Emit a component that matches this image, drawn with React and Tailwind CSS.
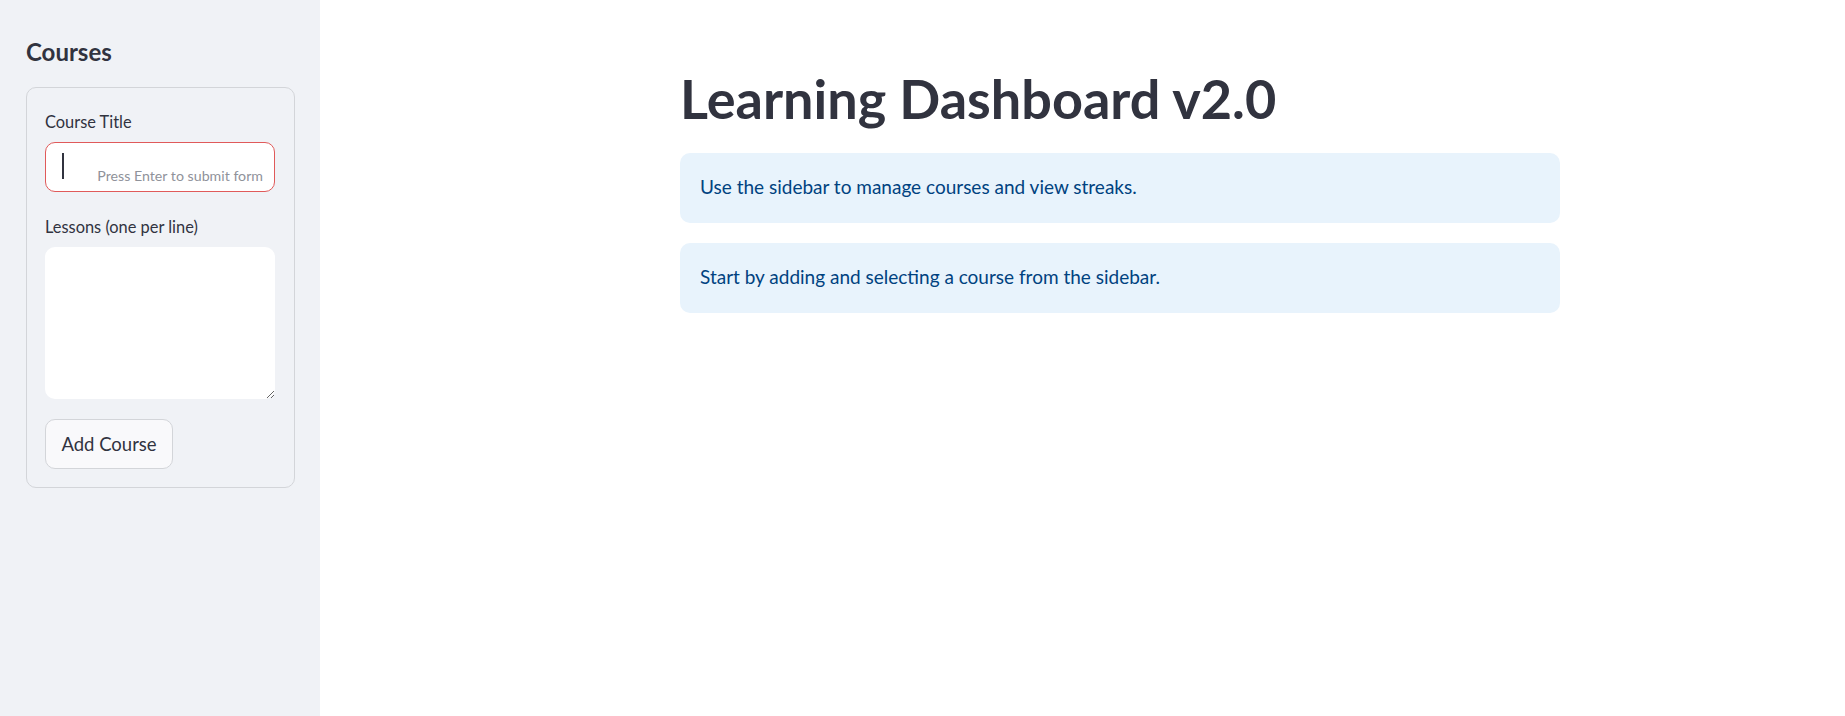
import React from "react";

export default function App() {
  return (
    <div
      className="flex h-[716px] w-full bg-white text-[#31333f]"
      style={{ fontFamily: "Lato, 'Noto Sans', sans-serif" }}
    >
      <aside className="w-[320px] shrink-0 bg-[#f0f2f6] pl-[26px] pt-[40px]">
        <h2 className="text-[24px] font-bold leading-[24px] text-[#31333f]">Courses</h2>
        <form
          className="mt-[23px] w-[269px] rounded-[10px] border border-[#d3d5d9] px-[18px] pb-[18px] pt-[24px]"
          onSubmit={(e) => e.preventDefault()}
        >
          <label className="block text-[16.4px] leading-[20px] text-[#31333f]">Course Title</label>
          <div className="relative mt-[10px] h-[50px] w-[230px] rounded-[10px] border border-[#e05a5a] bg-white">
            <span className="absolute left-[16px] top-[10px] h-[26px] w-[2px] bg-[#31333f]" />
            <span className="absolute bottom-[7px] right-[11px] text-[14.2px] leading-[17px] text-[#8f929a]">
              Press Enter to submit form
            </span>
          </div>
          <label className="mt-[25px] block text-[16.4px] leading-[20px] text-[#31333f]">
            Lessons (one per line)
          </label>
          <textarea
            className="mt-[10px] block h-[152px] w-[230px] resize-y rounded-[10px] bg-white outline-none"
            defaultValue=""
          />
          <button
            type="button"
            className="mt-[20px] flex h-[50px] w-[128px] items-center justify-center rounded-[10px] border border-[#d3d5d9] bg-[#f9f9fb] text-[18.5px] leading-[24px] text-[#31333f]"
          >
            Add Course
          </button>
        </form>
      </aside>
      <main className="flex-1 pl-[360px] pt-[66px]">
        <div className="w-[880px]">
          <h1 className="text-[54px] font-bold leading-[65px] text-[#31333f]">Learning Dashboard v2.0</h1>
          <div className="mt-[22px] flex flex-col gap-[20px]">
            <div className="h-[70px] rounded-[10px] bg-[#e8f3fc] px-[20px] pt-[19px] text-[19px] leading-[30px] text-[#004280]">
              Use the sidebar to manage courses and view streaks.
            </div>
            <div className="h-[70px] rounded-[10px] bg-[#e8f3fc] px-[20px] pt-[19px] text-[19px] leading-[30px] text-[#004280]">
              Start by adding and selecting a course from the sidebar.
            </div>
          </div>
        </div>
      </main>
    </div>
  );
}
